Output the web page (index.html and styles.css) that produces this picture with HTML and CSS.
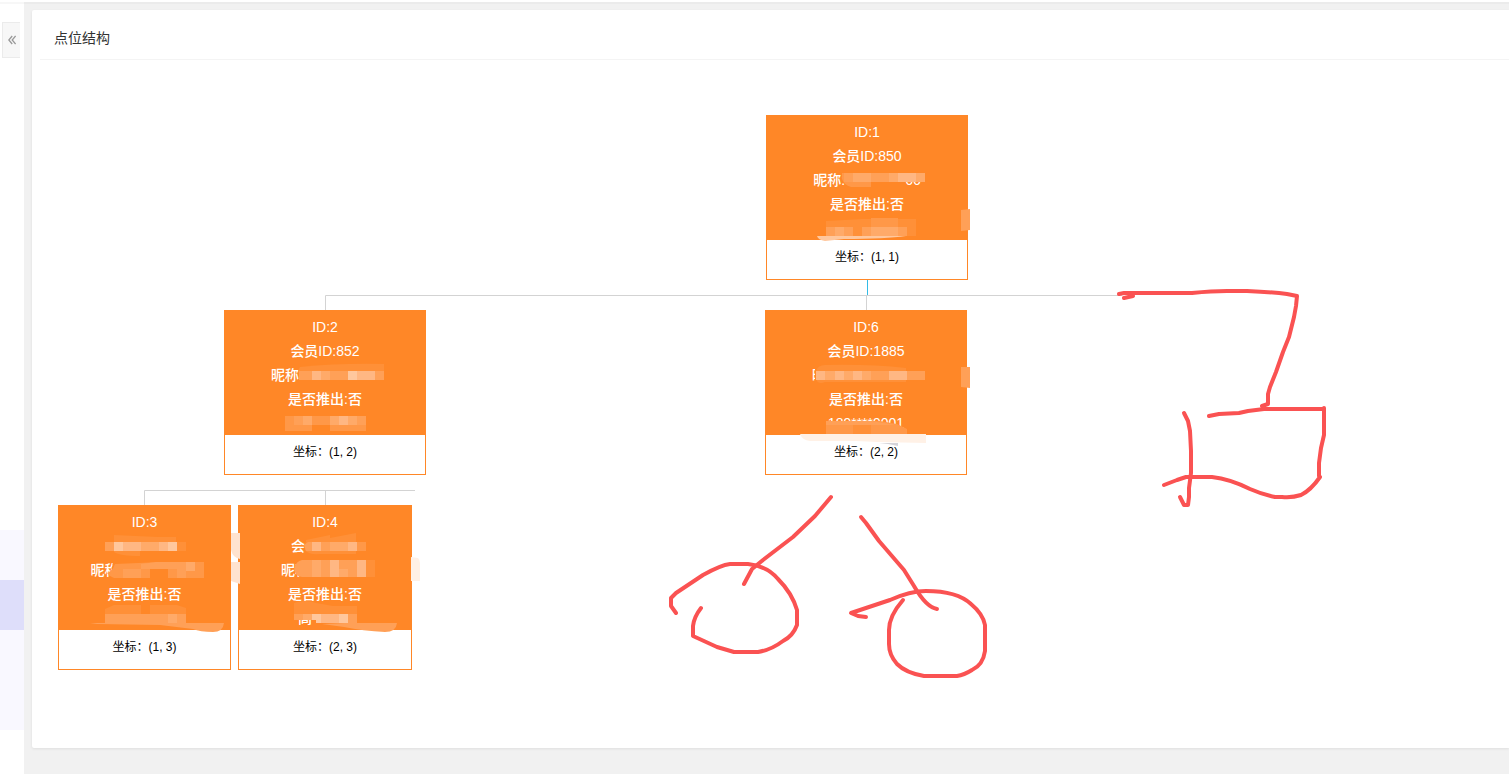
FILE: index.html
```html
<!DOCTYPE html>
<html lang="zh-CN">
<head>
<meta charset="utf-8">
<title>点位结构</title>
<link rel="stylesheet" href="styles.css">
</head>
<body>
<div class="layout">
  <aside class="sidebar">
    <button class="collapse" type="button" aria-label="收起">
      <svg width="8" height="10" viewBox="0 0 8 10"><path d="M4.2 1 .8 5l3.4 4M7.6 1 4.2 5l3.4 4"/></svg>
    </button>
    <nav class="submenu"><div class="submenu-active"></div></nav>
  </aside>
  <main class="main">
    <section class="card">
      <h1 class="card-title">点位结构</h1>
      <div class="canvas">
        <svg class="layer" viewBox="40 60 1469 688">
          <g class="links">
            <path d="M325.500 310V295.500H1122M866.500 295V310M144.500 505V490.500H415M325.500 490V505"/>
            <path class="link-root" d="M867.500 280V295"/>
          </g>
        </svg>

        <article class="node node-1">
          <div class="node-head">
            <p>ID:1</p><p>会员ID:850</p><p>昵称:<span class="hidden-text medium"></span>66</p><p>是否推出:否</p><p></p>
          </div>
          <div class="node-foot">坐标：(1, 1)</div>
        </article>
        <article class="node node-2">
          <div class="node-head">
            <p>ID:2</p><p>会员ID:852</p><p>昵称<span class="hidden-text wide"></span></p><p>是否推出:否</p><p></p>
          </div>
          <div class="node-foot">坐标：(1, 2)</div>
        </article>
        <article class="node node-6">
          <div class="node-head">
            <p>ID:6</p><p>会员ID:1885</p><p>昵称<span class="hidden-text wide"></span></p><p>是否推出:否</p><p>189****9001</p>
          </div>
          <div class="node-foot">坐标：(2, 2)</div>
        </article>
        <article class="node node-3">
          <div class="node-head">
            <p>ID:3</p><p></p><p>昵称<span class="hidden-text wide"></span></p><p>是否推出:否</p><p></p>
          </div>
          <div class="node-foot">坐标：(1, 3)</div>
        </article>
        <article class="node node-4">
          <div class="node-head">
            <p>ID:4</p><p>会员<span class="hidden-text narrow"></span></p><p>昵称<span class="hidden-text medium"></span></p><p>是否推出:否</p><p>高<span class="hidden-text narrow"></span></p>
          </div>
          <div class="node-foot">坐标：(2, 3)</div>
        </article>

        <svg class="layer" viewBox="40 60 1469 688">
          <g class="mosaic">
            <path class="c2" d="M842 173h29v14h-20q-7-2-9-8z"/>
            <path class="s9 c4" d="M853 177.500h18M889 177.500h9M916 177.500h9"/>
            <path class="s9 c3" d="M844 177.500h9M871 177.500h18"/>
            <path class="s9 c5" d="M898 177.500h18"/>
            <path class="c1" d="M826 221q20-1 36-2h54v17h-90z"/>
            <path class="c2" d="M871 218h27v9h-27z"/>
            <path class="s9 c3" d="M826 231.500h27M862 231.500h9M898 231.500h9"/>
            <path class="s9 c4" d="M835 231.500h9M871 231.500h27"/>
            <path class="c6" d="M817 236h89q-20 3-62 3l-19 2q-7-1-8-5z"/>
            <path class="c3" d="M961 210l9-1v21l-9 1z"/>

            <path class="c1" d="M300 367q40-4 84-3v16h-76q-9-3-10-9z"/>
            <path class="s9 c3" d="M299 375.500h13M330 375.500h18M375 375.500h9"/>
            <path class="s9 c5" d="M312 375.500h9"/><path class="s9 c4" d="M321 375.500h9"/>
            <path class="s9 c6" d="M348 375.500h9"/><path class="s9 c5" d="M357 375.500h18"/>
            <path class="s9 c2" d="M285 420.500h81"/>
            <path class="s9 c4" d="M303 420.500h9M330 420.500h9M348 420.500h9"/>
            <path class="s9 c5" d="M339 420.500h9"/><path class="s9 c3" d="M294 420.500h9M357 420.500h9"/>
            <path class="c2" d="M285 425h27v6h-27zM330 425h36v6h-36z"/>

            <path class="c0" d="M815 365h31v20h-31z"/>
            <path class="c1" d="M816 371q2-6 9-6 45-1 81 3v14h-81q-7 3-9-3z"/>
            <path class="s9 c3" d="M871 375.500h18M907 375.500h18"/>
            <path class="s9 c5" d="M816 375.500h9M835 375.500h9M853 375.500h9M889 375.500h18"/>
            <path class="s9 c4" d="M825 375.500h10M844 375.500h9M862 375.500h9"/>
            <path class="c3" d="M961 367h9v21l-9-1z"/>
            <path class="c2" d="M826 421h54l17 3 10 5v6h-81z"/>
            <path class="c1" d="M853 425h18v9h-18z"/>
            <path class="c3" d="M826 421h45v4h-45zM871 421l25 4h-25z"/>
            <path class="c7" d="M800 434h126v9l-48-1-22-1h-46q-8-1-10-7z"/>
            <path class="shadow" d="M879 443h19v3l-10-2z"/>

            <path class="c1" d="M114 535l44 2h18v14h-36v5q-20 0-26-4z"/>
            <path class="s9 c3" d="M105 546.500h9"/><path class="s9 c6" d="M114 546.500h9"/>
            <path class="s9 c5" d="M123 546.500h18M159 546.500h9"/><path class="s9 c4" d="M141 546.500h18"/>
            <path class="s9 c6" d="M168 546.500h9"/><path class="s9 c1" d="M177 546.500h9"/>
            <path class="c0" d="M113 562h8v16h-11z"/>
            <path class="c2" d="M115 564q35-2 71-2h18v16h-36v-9h-18v9h-36q-5-2-7-5 5-1 8-9z"/>
            <path class="c3" d="M141 564l15-2h39v7h-54zM123 569h18v9h-18zM177 569h9v9h-9z"/>
            <path class="c4" d="M186 562h9v9h-9z"/>
            <path class="c1" d="M105 609l9-4h27v9h9v-9h27l9 3v15h-81z"/>
            <path class="s9 c3" d="M105 618.500h63M177 618.500h9"/><path class="s9 c4" d="M168 618.500h9"/>
            <path class="c3" d="M90 623h134q-1 9-11 9-13 0-20-3l-33-4-63-1z"/>
            <path class="c8" d="M231 533h9v26q-7-1-9-9zM231 562h9v22l-9-3z"/>

            <path class="c0" d="M305 537h14v17h-14z"/>
            <path class="c1" d="M306 540l24-5v3l26-5v21h-36q-12 1-15-4z"/>
            <path class="c3" d="M304 545l4-3h50v9h-52z"/>
            <path class="s9 c5" d="M312 546.500h9M348 546.500h9"/><path class="s9 c4" d="M330 546.500h18"/>
            <path class="s9 c2" d="M357 546.500h9"/>
            <path class="c3" d="M294 569q2-8 8-9h64v17h-64q-7-1-8-8z"/>
            <path class="c5" d="M330 560h9v17h-9zM357 560h9v17h-9z"/>
            <path class="c4" d="M312 560h9v17h-9zM339 569h9v8h-9z"/>
            <path class="c1" d="M366 560h9v17h-9z"/>
            <path class="c1" d="M294 603q12-4 22 0l17 3h24v17h-41v-5h-22z"/>
            <path class="c3" d="M294 614h63v9h-41v-3h-22z"/>
            <path class="c4" d="M303 614h9v6h-9z"/>
            <path class="c6" d="M312 614h9v9h-5v-3h-4z"/>
            <path class="s9 c6" d="M339 618.500h9"/>
            <path class="s9 c5" d="M321 618.500h18"/>
            <path class="c3" d="M344 623h53q-1 9-12 9-22-1-41-5l-22-3z"/>
            <path class="c7" d="M411 557l7 1q2 2 2 5v18h-9z"/>
          </g>

          <g class="pen">
            <path d="M1133 296l-9 2M1119 294l5-1h68q20-2 35-2h20q25 1 40 3l10 2-1 10-2 11-5 20-6 15-7 20-6 15-2 7v10l-6 2"/>
            <path d="M1209 416l10-2 20-1 9-2 16-2h60v-1 27l-3 13-2 15v13l1 1q-9 13-19 18-9 3-19 2h-7q-14-3-25-8-20-10-38-12h-26l-9 3-13 5"/>
            <path d="M1184 413l4 8 2 10 1 20v22l-2 15v9l-1 8h-4l-4-8"/>
            <path d="M831 497l-16 19-22 21-30 23-11 9-8 15"/>
            <path d="M676 613l-5-7v-8l5-5 27-18q18-10 27-11h18q19 2 30 15 14 14 19 31v15q-4 11-14 16-12 9-25 11h-24l-17-5-24-11v-10q1-9 8-18"/>
            <path d="M861 517l5 6 13 18 25 29 10 16q12 21 23 23"/>
            <path d="M866 617l-8-1-7-3 39-13q20-9 36-9 31 0 45 13 12 10 14 21v26q-2 14-13 19-8 5-15 6h-33q-18-3-27-12-8-9-8-20v-14q0-14 14-30"/>
          </g>
        </svg>
      </div>
    </section>
  </main>
</div>
</body>
</html>
```

FILE: styles.css
```css
* { box-sizing: border-box; }

body {
  margin: 0;
  font-family: "Liberation Sans", "Noto Sans CJK SC", sans-serif;
  font-size: 14px;
  color: #333;
  background: #fff;
}

.layout {
  display: flex;
  min-height: 100vh;
  padding-top: 2px;
  overflow: hidden;
}

.sidebar {
  width: 24px;
  flex: none;
  border-top: 2px solid #f7f7f7;
  padding-top: 18px;
}

.collapse {
  display: flex;
  align-items: center;
  justify-content: center;
  width: 18px;
  height: 36px;
  margin: 0 0 0 2px;
  padding: 0;
  border: 1px solid #ebebeb;
  border-right: 0;
  background: #f7f7f7;
}

.collapse path {
  fill: none;
  stroke: #999;
  stroke-width: 1.3;
}

.submenu {
  height: 200px;
  margin-top: 472px;
  padding-top: 50px;
  background: #f9f8ff;
}

.submenu-active {
  height: 50px;
  background: #dedefa;
}

.main {
  flex: 1;
  min-width: 0;
  padding: 6px 0 24px 8px;
  border-top: 2px solid #ebebeb;
  background: #f1f1f1;
}

.card {
  padding-left: 8px;
  border-radius: 2px 0 0 2px;
  background: #fff;
  box-shadow: 0 1px 3px rgba(0, 0, 0, 0.08);
}

.card-title {
  margin: 0;
  height: 50px;
  padding: 4px 14px 0;
  border-bottom: 1px solid #f4f4f4;
  font-size: 14px;
  font-weight: 400;
  line-height: 48px;
}

.canvas {
  position: relative;
  height: 688px;
}

.layer {
  position: absolute;
  top: 0;
  left: 0;
  width: 1469px;
  height: 688px;
}

.links path {
  fill: none;
  stroke: #d3d3d3;
}

.links .link-root { stroke: #33bbe6; }

.node {
  position: absolute;
  width: 202px;
  border: 1px solid #ff8727;
  background: #fff;
  text-align: center;
}

.node-1 { left: 726px; top: 55px; }
.node-2 { left: 184px; top: 250px; }
.node-6 { left: 725px; top: 250px; }
.node-3 { left: 18px; top: 445px; width: 173px; }
.node-4 { left: 198px; top: 445px; width: 174px; }

.node-head {
  padding-top: 4px;
  background: #ff8727;
  color: #fff;
  font-weight: 500;
}

.node-head p {
  height: 24px;
  margin: 0;
  line-height: 24px;
  white-space: nowrap;
}

.node-foot {
  height: 39px;
  color: #000;
  font-size: 12px;
  line-height: 34px;
}

.hidden-text { display: inline-block; }
.wide { width: 80px; }
.medium { width: 60px; }
.narrow { width: 40px; }

.s9 { stroke-width: 9px; }
.c0 { fill: #ff8727; stroke: none; }
.c1 { fill: #ff9038; }
.c2 { fill: #ff9848; }
.c3 { fill: #ffa057; }
.c4 { fill: #ffaa69; }
.c5 { fill: #ffb783; }
.c6 { fill: #ffc79d; }
.c7 { fill: #fff1e6; }
.c8 { fill: #ffe3cf; }
.s9.c1 { stroke: #ff9038; }
.s9.c2 { stroke: #ff9848; }
.s9.c3 { stroke: #ffa057; }
.s9.c4 { stroke: #ffaa69; }
.s9.c5 { stroke: #ffb783; }
.s9.c6 { stroke: #ffc79d; }
.shadow { fill: #d5d3d8; }

.pen path {
  fill: none;
  stroke: #fa5252;
  stroke-width: 4px;
  stroke-linecap: round;
  stroke-linejoin: round;
}
```
